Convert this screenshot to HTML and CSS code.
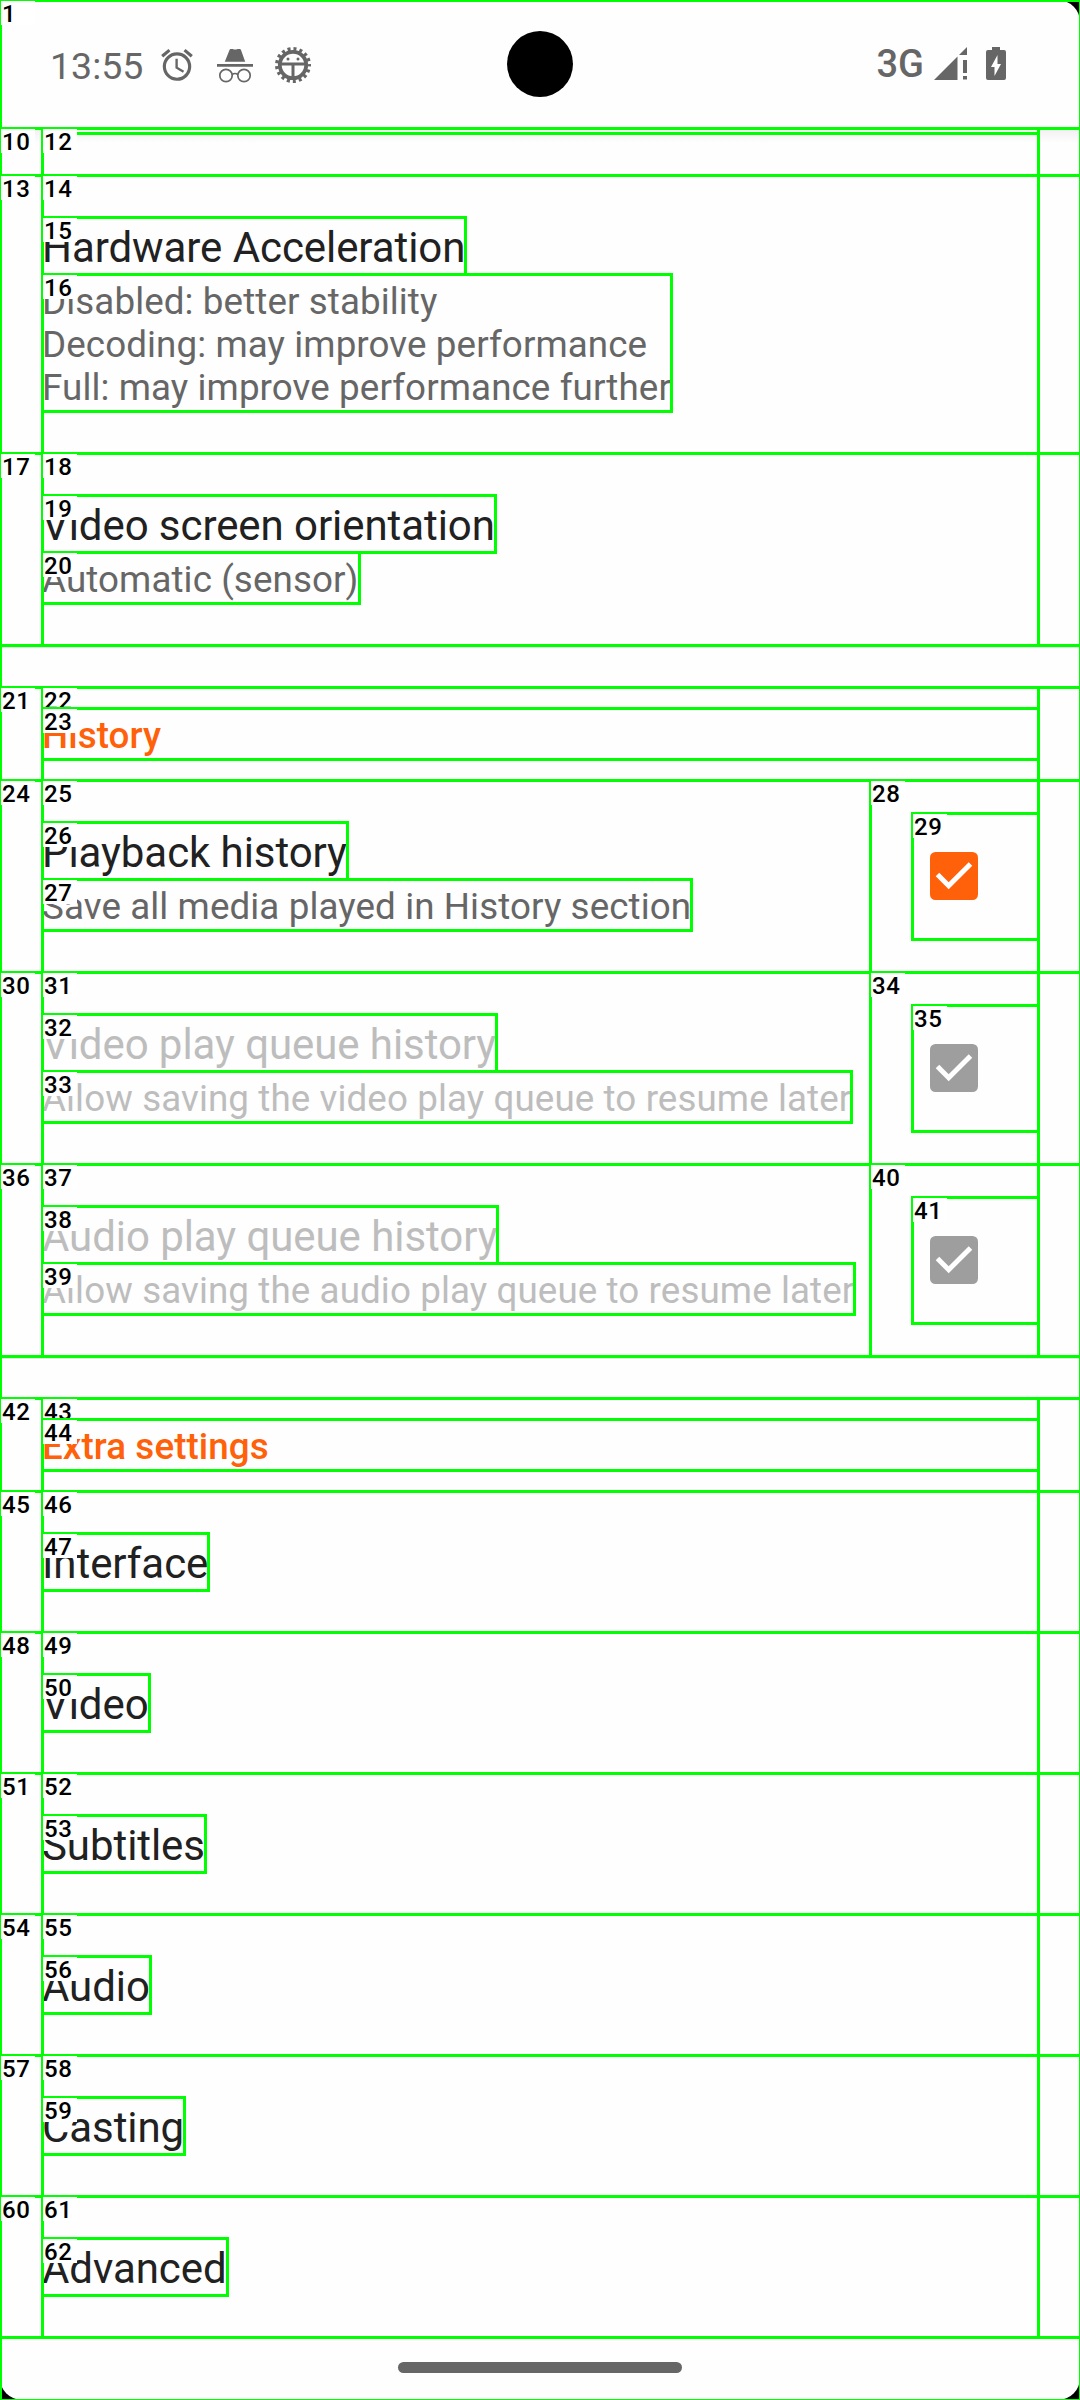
FILE: index.html
```html
<!DOCTYPE html>
<html lang="en">
<head>
<meta charset="utf-8">
<title>Settings</title>
<link rel="stylesheet" href="styles.css">
</head>
<body>
<div class="screen box"><b class="tag">1</b>
  <header class="status">
    <span class="time">13:55</span>
    <svg class="alarm" viewBox="0 0 24 24"><path d="M22 5.720l-4.600-3.860-1.290 1.530 4.600 3.860L22 5.720zM7.880 3.390L6.600 1.860 2 5.710l1.290 1.530 4.590-3.850zM12.500 8H11v6l4.750 2.850.75-1.230-4-2.370V8zM12 4c-4.970 0-9 4.030-9 9s4.020 9 9 9a9 9 0 0 0 0-18zm0 16c-3.870 0-7-3.130-7-7s3.130-7 7-7 7 3.130 7 7-3.130 7-7 7z"/></svg>
    <svg class="incognito" viewBox="0 0 36 36"><path d="M12.500 1q1-2 3.300-1 2.400 1 4.800 0 2.400-1 3.400 1l4.200 11.800H7.800z"/><path d="M0 15h36v2.700H0z"/><g fill="none" stroke="#666" stroke-width="1.700"><circle cx="9" cy="26.500" r="6.200"/><circle cx="27" cy="26.500" r="6.200"/><path d="M15.200 25.500q2.800-2 5.600 0"/></g></svg>
    <svg class="bug" viewBox="-18 -18 36 36"><circle r="16.200" fill="none" stroke="#666" stroke-width="3.600" stroke-dasharray="3 2.988" stroke-dashoffset="1.500"/><circle r="13.200" fill="none" stroke="#666" stroke-width="3.800"/><path d="M-13-2.500h26V.500H1.500V13h-3V.500H-13z"/><circle cx="-5" cy="-6" r="1.500"/><circle cx="5" cy="-6" r="1.500"/></svg>
    <i class="camera"></i>
    <span class="network">3G</span>
    <svg class="signal" viewBox="0 0 33 33"><path d="M0 33L23.500 9.500V33zM33 0v8h-8zM29 13h4v13h-4zM29 29h4v3.500h-4z"/></svg>
    <svg class="battery" viewBox="0 0 20 33"><path fill-rule="evenodd" d="M6 0h8v3h4q2 0 2 2v26q0 2-2 2H2q-2 0-2-2V5q0-2 2-2h4zM11.500 8L5 20h3.500v9L15 17h-3.500z"/></svg>
  </header>

  <main>
    <div class="row peek box"><b class="tag">10</b><div class="col box"><b class="tag">12</b><div class="sliver"></div></div></div>
    <div class="row box"><b class="tag">13</b><div class="col pad box"><b class="tag">14</b>
      <div class="title box"><b class="tag">15</b>Hardware Acceleration</div>
      <div class="sub box"><b class="tag">16</b>Disabled: better stability<br>Decoding: may improve performance<br>Full: may improve performance further</div></div></div>
    <div class="row box"><b class="tag">17</b><div class="col pad box"><b class="tag">18</b>
      <div class="title box"><b class="tag">19</b>Video screen orientation</div>
      <div class="sub box"><b class="tag">20</b>Automatic (sensor)</div></div></div>
    <div class="gap"></div>

    <div class="row box"><b class="tag">21</b><div class="col head box"><b class="tag">22</b>
      <div class="sub heading box"><b class="tag">23</b>History</div></div></div>
    <div class="row box"><b class="tag">24</b><div class="col pad narrow box"><b class="tag">25</b>
      <div class="title box"><b class="tag">26</b>Playback history</div>
      <div class="sub box"><b class="tag">27</b>Save all media played in History section</div></div>
      <div class="widget box"><b class="tag">28</b><div class="check box"><b class="tag">29</b><svg viewBox="0 0 48 48"><rect width="48" height="48" rx="5.500"/><path d="M7.500 22.500L18.700 33.700 40.500 12"/></svg></div></div></div>
    <div class="row off box"><b class="tag">30</b><div class="col pad narrow box"><b class="tag">31</b>
      <div class="title box"><b class="tag">32</b>Video play queue history</div>
      <div class="sub box"><b class="tag">33</b>Allow saving the video play queue to resume later</div></div>
      <div class="widget box"><b class="tag">34</b><div class="check box"><b class="tag">35</b><svg viewBox="0 0 48 48"><rect width="48" height="48" rx="5.500"/><path d="M7.500 22.500L18.700 33.700 40.500 12"/></svg></div></div></div>
    <div class="row off box"><b class="tag">36</b><div class="col pad narrow box"><b class="tag">37</b>
      <div class="title box"><b class="tag">38</b>Audio play queue history</div>
      <div class="sub box"><b class="tag">39</b>Allow saving the audio play queue to resume later</div></div>
      <div class="widget box"><b class="tag">40</b><div class="check box"><b class="tag">41</b><svg viewBox="0 0 48 48"><rect width="48" height="48" rx="5.500"/><path d="M7.500 22.500L18.700 33.700 40.500 12"/></svg></div></div></div>
    <div class="gap"></div>

    <div class="row box"><b class="tag">42</b><div class="col head box"><b class="tag">43</b>
      <div class="sub heading box"><b class="tag">44</b>Extra settings</div></div></div>
    <div class="row box"><b class="tag">45</b><div class="col pad box"><b class="tag">46</b><div class="title box"><b class="tag">47</b>Interface</div></div></div>
    <div class="row box"><b class="tag">48</b><div class="col pad box"><b class="tag">49</b><div class="title box"><b class="tag">50</b>Video</div></div></div>
    <div class="row box"><b class="tag">51</b><div class="col pad box"><b class="tag">52</b><div class="title box"><b class="tag">53</b>Subtitles</div></div></div>
    <div class="row box"><b class="tag">54</b><div class="col pad box"><b class="tag">55</b><div class="title box"><b class="tag">56</b>Audio</div></div></div>
    <div class="row box"><b class="tag">57</b><div class="col pad box"><b class="tag">58</b><div class="title box"><b class="tag">59</b>Casting</div></div></div>
    <div class="row box"><b class="tag">60</b><div class="col pad box"><b class="tag">61</b><div class="title box"><b class="tag">62</b>Advanced</div></div></div>
  </main>
  <footer class="nav"><i class="pill"></i></footer>
</div>
</body>
</html>
```
FILE: styles.css
```css
* { box-sizing: border-box; }

body {
  margin: 0;
  font-family: Roboto, "Liberation Sans", sans-serif;
  color: #212121;
}

.screen {
  width: 1080px;
  height: 2400px;
  overflow: hidden;
  display: flex;
  flex-direction: column;
  background: #000;
  isolation: isolate;
}

/* Rounded display corners */
.screen::after {
  content: "";
  position: absolute;
  inset: 0;
  z-index: -1;
  border-radius: 22px;
  background: #fefefe;
}

/* Element bounds and their numbers */
.box { position: relative; }
.box::before {
  content: "";
  position: absolute;
  inset: -1px -2px -2px -1px;
  border: 3px solid #0f0;
  pointer-events: none;
}
.tag {
  position: absolute;
  left: 1px;
  top: 1px;
  width: 34px;
  height: 24px;
  padding-left: 1px;
  background: #fff;
  color: #000;
  font: 500 24px/27px Roboto, sans-serif;
  letter-spacing: 0.6px;
  white-space: nowrap;
}

/* A number row that is clipped by the status bar */
.sliver { height: 6px; border-bottom: 3px solid #0f0; margin: 1px 0 0 35px; }

/* Status bar */
.status {
  flex: none;
  height: 128px;
  padding: 0 74px 0 50px;
  display: flex;
  align-items: flex-start;
  color: #666;
  fill: #666;
}
.status svg { flex: none; display: block; }
.time { width: 108px; padding-top: 44px; font-size: 37.500px; line-height: 44px; }
.alarm { width: 38px; height: 38px; margin-top: 46px; }
.incognito { width: 36px; height: 36px; margin: 49px 0 0 21px; }
.bug { width: 36px; height: 36px; margin: 47px 0 0 22px; }
.camera {
  width: 66px;
  height: 66px;
  margin: 31px 0 0 196px;
  border-radius: 50%;
  background: #000;
}
.network { margin: 42px 0 0 auto; font-size: 38px; font-weight: 500; line-height: 45px; }
.signal { width: 33px; height: 33px; margin: 47px 0 0 10px; }
.battery { width: 20px; height: 33px; margin: 47px 0 0 19px; }

/* Preference list */
main { flex: none; }
.row { display: flex; padding: 0 42px; }
.col { flex: 1; min-width: 0; }
.peek { height: 47px; background: linear-gradient(#f0f0f0, #fefefe 15px); }
.pad { padding: 42px 0; }
.head { padding: 21px 0; }
.gap { height: 42px; border-top: 3px solid #e4e4e4; }

.title {
  width: fit-content;
  height: 57px;
  padding-top: 4px;
  font-size: 42px;
  letter-spacing: -0.07px;
  line-height: 53px;
  white-space: nowrap;
}
.sub {
  width: fit-content;
  padding: 6px 0 2px;
  color: #666;
  font-size: 36.750px;
  letter-spacing: 0.1px;
  line-height: 43px;
  white-space: nowrap;
}
.heading { width: 100%; color: #ff610a; font-weight: 500; }
.off .title, .off .sub { color: #bdbdbd; }
.off .tag, .heading .tag { color: #000; }

.narrow { flex: 0 0 828px; }
.widget { flex: 1; display: flex; align-items: center; padding-left: 42px; }
.check { width: 126px; height: 126px; padding: 39px 0 0 18px; }
.check svg { display: block; width: 48px; height: 48px; fill: #ff610a; }
.off .check svg { fill: #9e9e9e; }
.check path { fill: none; stroke: #fff; stroke-width: 5; }

/* Gesture navigation */
.nav { flex: 1; display: flex; justify-content: center; padding-top: 25px; }
.pill { width: 284px; height: 11px; border-radius: 5.500px; background: #666; }
```
